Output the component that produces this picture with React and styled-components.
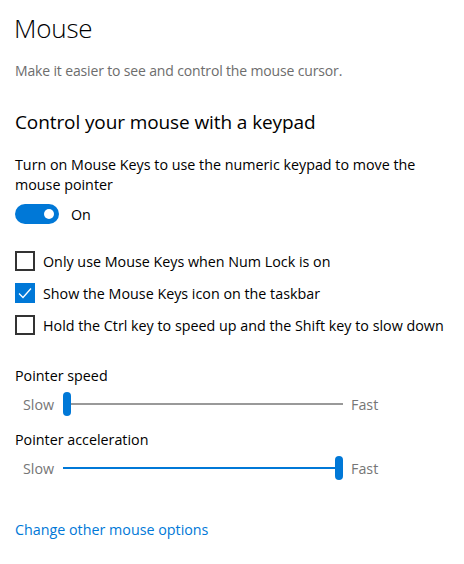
import React from "react";
import styled, { createGlobalStyle } from "styled-components";

const Global = createGlobalStyle`
  html, body { margin: 0; padding: 0; background: #fff; }
  body { font-family: "Open Sans", "Noto Sans", sans-serif; color: #000; }
`;

const Page = styled.div`
  width: 464px;
  height: 564px;
  box-sizing: border-box;
  padding: 10px 15px 0 14px;
  display: flex;
  flex-direction: column;
  overflow: hidden;
`;

const Title = styled.h1`
  margin: 0;
  font-weight: 300;
  font-size: 26px;
  line-height: 36px;
  letter-spacing: -0.2px;
`;

const Subtitle = styled.p`
  margin: 15px 0 0 1px;
  font-size: 14px;
  line-height: 20px;
  color: #6d6d6d;
  letter-spacing: -0.15px;
`;

const SectionTitle = styled.h2`
  margin: 28px 0 0 1px;
  font-weight: 400;
  font-size: 19px;
  line-height: 26px;
  letter-spacing: -0.1px;
`;

const Para = styled.p`
  margin: 20px 0 0 1px;
  font-size: 14.3px;
  line-height: 20px;
  color: #000;
`;

const ToggleRow = styled.div`
  display: flex;
  align-items: center;
  gap: 12px;
  margin: 9px 0 0 1px;
  height: 20px;
  font-size: 14.3px;
`;

const ToggleTrack = styled.div`
  width: 44px;
  height: 20px;
  border-radius: 10px;
  background: ${(p) => (p.$on ? "#0078d7" : "#fff")};
  display: flex;
  align-items: center;
  justify-content: ${(p) => (p.$on ? "flex-end" : "flex-start")};
  padding: 0 5px;
  box-sizing: border-box;
`;

const Knob = styled.div`
  width: 10px;
  height: 10px;
  border-radius: 50%;
  background: #fff;
`;

const CheckList = styled.div`
  display: flex;
  flex-direction: column;
  gap: 12px;
  margin: 27px 0 0 1px;
`;

const CheckRow = styled.div`
  display: flex;
  align-items: center;
  gap: 8px;
  height: 20px;
  font-size: 14.3px;
  color: #000;
`;

const Box = styled.div`
  width: 20px;
  height: 20px;
  box-sizing: border-box;
  border: ${(p) => (p.$checked ? "none" : "2px solid #333")};
  background: ${(p) => (p.$checked ? "#0078d7" : "#fff")};
  display: flex;
  align-items: center;
  justify-content: center;
  flex: none;
`;

const SliderLabel = styled.div`
  margin: ${(p) => p.$mt}px 0 0 1px;
  font-size: 14.3px;
  line-height: 20px;
`;

const SliderRow = styled.div`
  display: flex;
  align-items: center;
  height: 24px;
  margin-top: 6px;
  padding-left: 9px;
  font-size: 14.3px;
  color: #767676;
`;

const EndLabel = styled.span`
  width: ${(p) => p.$w}px;
  flex: none;
`;

const Track = styled.div`
  position: relative;
  width: 280px;
  height: 24px;
  flex: none;
  margin-right: 8px;
`;

const Rail = styled.div`
  position: absolute;
  left: 0;
  right: 0;
  top: 11px;
  height: 2px;
  background: #999;
`;

const Fill = styled.div`
  position: absolute;
  left: 0;
  top: 11px;
  height: 2px;
  background: #0078d7;
`;

const Thumb = styled.div`
  position: absolute;
  top: 0;
  width: 8px;
  height: 24px;
  border-radius: 4px;
  background: #0078d7;
`;

const Link = styled.a`
  margin: 40px 0 0 1px;
  font-size: 14.3px;
  line-height: 20px;
  color: #0078d7;
  text-decoration: none;
`;

const Check = () => (
  <svg width="14" height="12" viewBox="0 0 14 12">
    <path d="M1 6.5 L5 10.5 L13 1.5" fill="none" stroke="#fff" strokeWidth="1.3" />
  </svg>
);

function Slider({ value }) {
  const w = 280;
  const x = Math.round((w - 8) * value);
  return (
    <SliderRow>
      <EndLabel $w={40}>Slow</EndLabel>
      <Track>
        <Rail />
        <Fill style={{ width: x + 4 }} />
        <Thumb style={{ left: x }} />
      </Track>
      <EndLabel $w={40}>Fast</EndLabel>
    </SliderRow>
  );
}

const checks = [
  { label: "Only use Mouse Keys when Num Lock is on", checked: false },
  { label: "Show the Mouse Keys icon on the taskbar", checked: true },
  { label: "Hold the Ctrl key to speed up and the Shift key to slow down", checked: false },
];

export default function App() {
  return (
    <Page>
      <Global />
      <Title>Mouse</Title>
      <Subtitle>Make it easier to see and control the mouse cursor.</Subtitle>
      <SectionTitle>Control your mouse with a keypad</SectionTitle>
      <Para>Turn on Mouse Keys to use the numeric keypad to move the mouse pointer</Para>
      <ToggleRow>
        <ToggleTrack $on>
          <Knob />
        </ToggleTrack>
        On
      </ToggleRow>
      <CheckList>
        {checks.map((c) => (
          <CheckRow key={c.label}>
            <Box $checked={c.checked}>{c.checked && <Check />}</Box>
            {c.label}
          </CheckRow>
        ))}
      </CheckList>
      <SliderLabel $mt={31}>Pointer speed</SliderLabel>
      <Slider value={0} />
      <SliderLabel $mt={14}>Pointer acceleration</SliderLabel>
      <Slider value={1} />
      <Link href="#">Change other mouse options</Link>
    </Page>
  );
}
